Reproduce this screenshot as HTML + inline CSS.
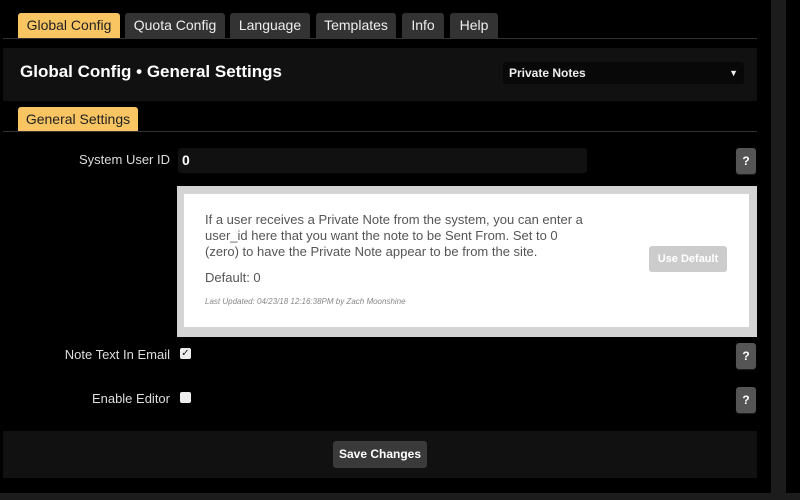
<!DOCTYPE html>
<html><head><style>
*{margin:0;padding:0;box-sizing:border-box}
body{width:800px;height:500px;background:#000;font-family:"Liberation Sans",sans-serif;position:relative;overflow:hidden}
.a{position:absolute}
.tab{position:absolute;top:13px;height:25px;background:#333;color:#eee;font-size:14px;line-height:25px;text-align:center;border-radius:3px 3px 0 0}
.q{position:absolute;left:736px;width:20px;height:26px;background:#555;border-radius:3px;color:#fff;font-weight:bold;font-size:12px;text-align:center;line-height:26px;box-shadow:0 1px 1px #222}
.lbl{position:absolute;right:630px;color:#ddd;font-size:13px}
</style></head><body>
<div class="a" style="left:771px;top:0;width:15px;height:500px;background:#1c1c1c"></div>
<div class="a" style="left:0;top:493px;width:800px;height:7px;background:#1c1c1c"></div>
<div class="a" style="left:0;top:0;width:771px;height:493px;background:#000;border-radius:0 0 6px 0"></div>
<div class="tab" style="left:18px;width:102px;background:#f8c562;color:#222">Global Config</div>
<div class="tab" style="left:125px;width:100px">Quota Config</div>
<div class="tab" style="left:230px;width:80px">Language</div>
<div class="tab" style="left:316px;width:80px">Templates</div>
<div class="tab" style="left:402px;width:42px">Info</div>
<div class="tab" style="left:450px;width:48px">Help</div>
<div class="a" style="left:3px;top:38px;width:754px;height:1px;background:#333"></div>
<div class="a" style="left:3px;top:48px;width:754px;height:53px;background:#111"></div>
<div class="a" style="left:20px;top:62px;color:#fff;font-weight:bold;font-size:17px">Global Config • General Settings</div>
<div class="a" style="left:503px;top:62px;width:241px;height:22px;background:#080808;border-radius:3px;color:#eee;font-size:12px;font-weight:bold;line-height:22px;padding-left:6px">Private Notes<span style="position:absolute;right:6px;font-size:9px">▼</span></div>
<div class="tab" style="left:18px;top:107px;width:120px;height:24px;line-height:24px;background:#f8c562;color:#222">General Settings</div>
<div class="a" style="left:3px;top:131px;width:754px;height:1px;background:#333"></div>
<div class="lbl" style="top:152px">System User ID</div>
<div class="a" style="left:178px;top:148px;width:409px;height:25px;background:#111;border-radius:3px;color:#fff;font-weight:bold;font-size:14px;line-height:24px;padding-left:4px">0</div>
<div class="q" style="top:148px">?</div>
<div class="a" style="left:177px;top:186px;width:580px;height:151px;background:#d4d4d4"></div>
<div class="a" style="left:184px;top:194px;width:565px;height:133px;background:#fff"></div>
<div class="a" style="left:205px;top:212px;width:420px;color:#555;font-size:13px;line-height:16px;white-space:nowrap">If a user receives a Private Note from the system, you can enter a<br>user_id here that you want the note to be Sent From. Set to 0<br>(zero) to have the Private Note appear to be from the site.</div>
<div class="a" style="left:205px;top:270px;color:#555;font-size:13px">Default: 0</div>
<div class="a" style="left:205px;top:297px;color:#888;font-size:8px;font-style:italic">Last Updated: 04/23/18 12:16:38PM by Zach Moonshine</div>
<div class="a" style="left:649px;top:246px;width:78px;height:26px;background:#ccc;border-radius:3px;color:#fff;font-weight:bold;font-size:11px;text-align:center;line-height:26px">Use Default</div>
<div class="lbl" style="top:347px">Note Text In Email</div>
<div class="a" style="left:180px;top:348px;width:11px;height:11px;background:#eee;border-radius:2px;color:#222;font-size:10px;line-height:11px;text-align:center">✓</div>
<div class="q" style="top:343px">?</div>
<div class="lbl" style="top:391px">Enable Editor</div>
<div class="a" style="left:180px;top:392px;width:11px;height:11px;background:#eee;border-radius:2px"></div>
<div class="q" style="top:387px">?</div>
<div class="a" style="left:3px;top:431px;width:754px;height:47px;background:#111"></div>
<div class="a" style="left:333px;top:441px;width:94px;height:27px;background:#3a3a3a;border-radius:3px;color:#fff;font-weight:bold;font-size:12px;text-align:center;line-height:27px">Save Changes</div>
</body></html>
